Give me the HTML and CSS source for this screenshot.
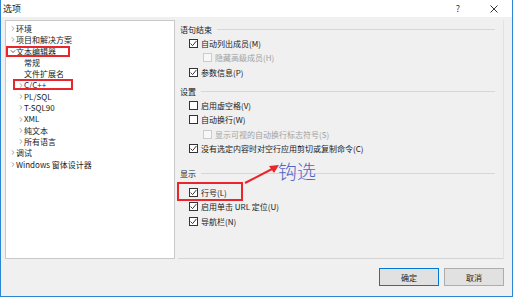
FILE: index.html
```html
<!DOCTYPE html>
<html lang="zh-CN">
<head>
  <meta charset="UTF-8">
  <title>选项</title>
  <link rel="stylesheet" href="styles.css">
</head>
<body>
  <div class="window">
    <div class="titlebar">
      <span class="title">选项</span>
      <span class="help">?</span>
      <svg class="close" width="8" height="8" viewBox="0 0 8 8"><path d="M0.5 0.5 L7.5 7.5 M7.5 0.5 L0.5 7.5" stroke="#222" stroke-width="0.9" fill="none"/></svg>
    </div>

    <div class="main">
      <div class="tree">
        <div class="node"><svg class="arrow" width="3" height="5" viewBox="0 0 3 5"><path d="M0.3 0.3 L2.5 2.5 L0.3 4.7" stroke="#888" stroke-width="0.8" fill="none"/></svg>环境</div>
        <div class="node"><svg class="arrow" width="3" height="5" viewBox="0 0 3 5"><path d="M0.3 0.3 L2.5 2.5 L0.3 4.7" stroke="#888" stroke-width="0.8" fill="none"/></svg>项目和解决方案</div>
        <div class="node"><svg class="arrow" width="5" height="3" viewBox="0 0 5 3"><path d="M0.3 0.3 L2.5 2.5 L4.7 0.3" stroke="#333" stroke-width="0.8" fill="none"/></svg>文本编辑器<span class="mark mark-editor"></span></div>
        <div class="node sub leaf">常规</div>
        <div class="node sub leaf">文件扩展名</div>
        <div class="node sub selected"><svg class="arrow" width="3" height="5" viewBox="0 0 3 5"><path d="M0.3 0.3 L2.5 2.5 L0.3 4.7" stroke="#888" stroke-width="0.8" fill="none"/></svg>C/C++<span class="mark mark-cpp"></span></div>
        <div class="node sub"><svg class="arrow" width="3" height="5" viewBox="0 0 3 5"><path d="M0.3 0.3 L2.5 2.5 L0.3 4.7" stroke="#888" stroke-width="0.8" fill="none"/></svg>PL/SQL</div>
        <div class="node sub"><svg class="arrow" width="3" height="5" viewBox="0 0 3 5"><path d="M0.3 0.3 L2.5 2.5 L0.3 4.7" stroke="#888" stroke-width="0.8" fill="none"/></svg>T-SQL90</div>
        <div class="node sub"><svg class="arrow" width="3" height="5" viewBox="0 0 3 5"><path d="M0.3 0.3 L2.5 2.5 L0.3 4.7" stroke="#888" stroke-width="0.8" fill="none"/></svg>XML</div>
        <div class="node sub"><svg class="arrow" width="3" height="5" viewBox="0 0 3 5"><path d="M0.3 0.3 L2.5 2.5 L0.3 4.7" stroke="#888" stroke-width="0.8" fill="none"/></svg>纯文本</div>
        <div class="node sub"><svg class="arrow" width="3" height="5" viewBox="0 0 3 5"><path d="M0.3 0.3 L2.5 2.5 L0.3 4.7" stroke="#888" stroke-width="0.8" fill="none"/></svg>所有语言</div>
        <div class="node"><svg class="arrow" width="3" height="5" viewBox="0 0 3 5"><path d="M0.3 0.3 L2.5 2.5 L0.3 4.7" stroke="#888" stroke-width="0.8" fill="none"/></svg>调试</div>
        <div class="node"><svg class="arrow" width="3" height="5" viewBox="0 0 3 5"><path d="M0.3 0.3 L2.5 2.5 L0.3 4.7" stroke="#888" stroke-width="0.8" fill="none"/></svg>Windows 窗体设计器</div>
      </div>

      <div class="panel">
        <div class="group-title"><span>语句结束</span><i class="rule"></i></div>
        <div class="opt"><span class="box"><svg width="7" height="7" viewBox="0 0 7 7"><path d="M0.6 3.6 L2.6 5.6 L6.4 1" stroke="#222" stroke-width="0.9" fill="none"/></svg></span>自动列出成员(M)</div>
        <div class="opt sub disabled"><span class="box"></span>隐藏高级成员(H)</div>
        <div class="opt"><span class="box"><svg width="7" height="7" viewBox="0 0 7 7"><path d="M0.6 3.6 L2.6 5.6 L6.4 1" stroke="#222" stroke-width="0.9" fill="none"/></svg></span>参数信息(P)</div>

        <div class="group-title second"><span>设置</span><i class="rule"></i></div>
        <div class="opt"><span class="box"></span>启用虚空格(V)</div>
        <div class="opt"><span class="box"></span>自动换行(W)</div>
        <div class="opt sub disabled"><span class="box"></span>显示可视的自动换行标志符号(S)</div>
        <div class="opt"><span class="box"><svg width="7" height="7" viewBox="0 0 7 7"><path d="M0.6 3.6 L2.6 5.6 L6.4 1" stroke="#222" stroke-width="0.9" fill="none"/></svg></span>没有选定内容时对空行应用剪切或复制命令(C)</div>

        <div class="group-title third"><span>显示</span><i class="rule"></i></div>
        <div class="opt"><span class="box"><svg width="7" height="7" viewBox="0 0 7 7"><path d="M0.6 3.6 L2.6 5.6 L6.4 1" stroke="#222" stroke-width="0.9" fill="none"/></svg></span>行号(L)<span class="mark mark-line"></span></div>
        <div class="opt"><span class="box"><svg width="7" height="7" viewBox="0 0 7 7"><path d="M0.6 3.6 L2.6 5.6 L6.4 1" stroke="#222" stroke-width="0.9" fill="none"/></svg></span>启用单击 URL 定位(U)</div>
        <div class="opt"><span class="box"><svg width="7" height="7" viewBox="0 0 7 7"><path d="M0.6 3.6 L2.6 5.6 L6.4 1" stroke="#222" stroke-width="0.9" fill="none"/></svg></span>导航栏(N)</div>
      </div>
    </div>

    <div class="footer">
      <button class="btn default">确定</button>
      <button class="btn">取消</button>
    </div>

    <!-- annotation drawn over the dialog -->
    <svg class="callout-arrow" width="40" height="24" viewBox="0 0 40 24">
      <path d="M2 21 L31 6" stroke="#e8262c" stroke-width="2" fill="none"/>
      <path d="M36 3 L26 4 L31 11 Z" fill="#e8262c"/>
    </svg>
    <div class="callout">钩选</div>
  </div>
</body>
</html>
```

FILE: styles.css
```css
* {
  box-sizing: border-box;
}

body {
  margin: 0;
  font-family: "Noto Sans CJK SC", "Liberation Sans", sans-serif;
  font-size: 8px;
  color: #1a1a1a;
}

.window {
  position: relative;
  width: 513px;
  height: 297px;
  background-color: #f0f0f0;
  border: 1px solid #2b87d6;
  border-top: none;
  display: flex;
  flex-direction: column;
}

.titlebar {
  height: 17px;
  background-color: #fff;
  display: flex;
  align-items: center;
  padding-left: 2px;
}

.titlebar .title {
  font-size: 9px;
  flex: 1;
}

.titlebar .help {
  font-size: 9px;
  color: #333;
  margin-right: 30px;
}

.titlebar .close {
  margin-right: 14px;
}

.main {
  display: flex;
  gap: 3px;
  padding: 3px 8px 0 4px;
  height: 242px;
}

.tree {
  width: 170px;
  height: 239px;
  background-color: #fff;
  border: 1px solid #c9c9c9;
  padding-top: 2px;
}

.node {
  position: relative;
  height: 11.3px;
  line-height: 11.3px;
  display: flex;
  align-items: center;
  padding-left: 4px;
  white-space: nowrap;
}

.node svg.arrow {
  width: 6px;
  flex: none;
}

.node.sub {
  padding-left: 12px;
}

.node.leaf {
  padding-left: 18px;
}

.node.selected {
  color: #0a2a66;
}

.mark {
  position: absolute;
  border: 2px solid #e8262c;
}

.mark-editor {
  left: 0;
  top: 0;
  width: 64px;
  height: 11px;
}

.mark-cpp {
  left: 7px;
  top: 0;
  width: 60px;
  height: 11px;
}

.panel {
  flex: 1;
  height: 239px;
  border-right: 1px solid #e2e2e2;
  border-bottom: 1px solid #d4d4d4;
  padding: 2px 8px 0 2px;
}

.group-title {
  display: flex;
  align-items: center;
  height: 14px;
}

.group-title .rule {
  flex: 1;
  height: 1px;
  background-color: #d6d6d6;
  margin-left: 5px;
}

.group-title.second {
  margin-top: 4.5px;
}

.group-title.third {
  margin-top: 10px;
  margin-bottom: 5px;
}

.opt {
  position: relative;
  height: 14.5px;
  display: flex;
  align-items: center;
  padding-left: 9px;
  white-space: nowrap;
}

.opt.sub {
  padding-left: 23px;
}

.box {
  width: 9px;
  height: 9px;
  border: 1px solid #333;
  background-color: #fff;
  margin-right: 3px;
  display: flex;
  align-items: center;
  justify-content: center;
  flex: none;
}

.opt.disabled {
  color: #a2a2a2;
}

.opt.disabled .box {
  border-color: #cccccc;
  background-color: #f7f7f7;
}

.mark-line {
  left: -3px;
  top: -3px;
  width: 66px;
  height: 19px;
}

.footer {
  display: flex;
  justify-content: flex-end;
  gap: 5px;
  padding: 9px 8px 0 0;
}

.btn {
  width: 60px;
  height: 18px;
  padding: 0;
  font-family: inherit;
  font-size: 8px;
  color: #1a1a1a;
  background-color: #e1e1e1;
  border: 1px solid #adadad;
}

.btn.default {
  border-color: #0078d7;
}

.callout-arrow {
  position: absolute;
  left: 242px;
  top: 162px;
}

.callout {
  position: absolute;
  left: 277px;
  top: 158px;
  font-size: 19px;
  font-weight: 300;
  line-height: 26px;
  color: #5163c6;
}
```
